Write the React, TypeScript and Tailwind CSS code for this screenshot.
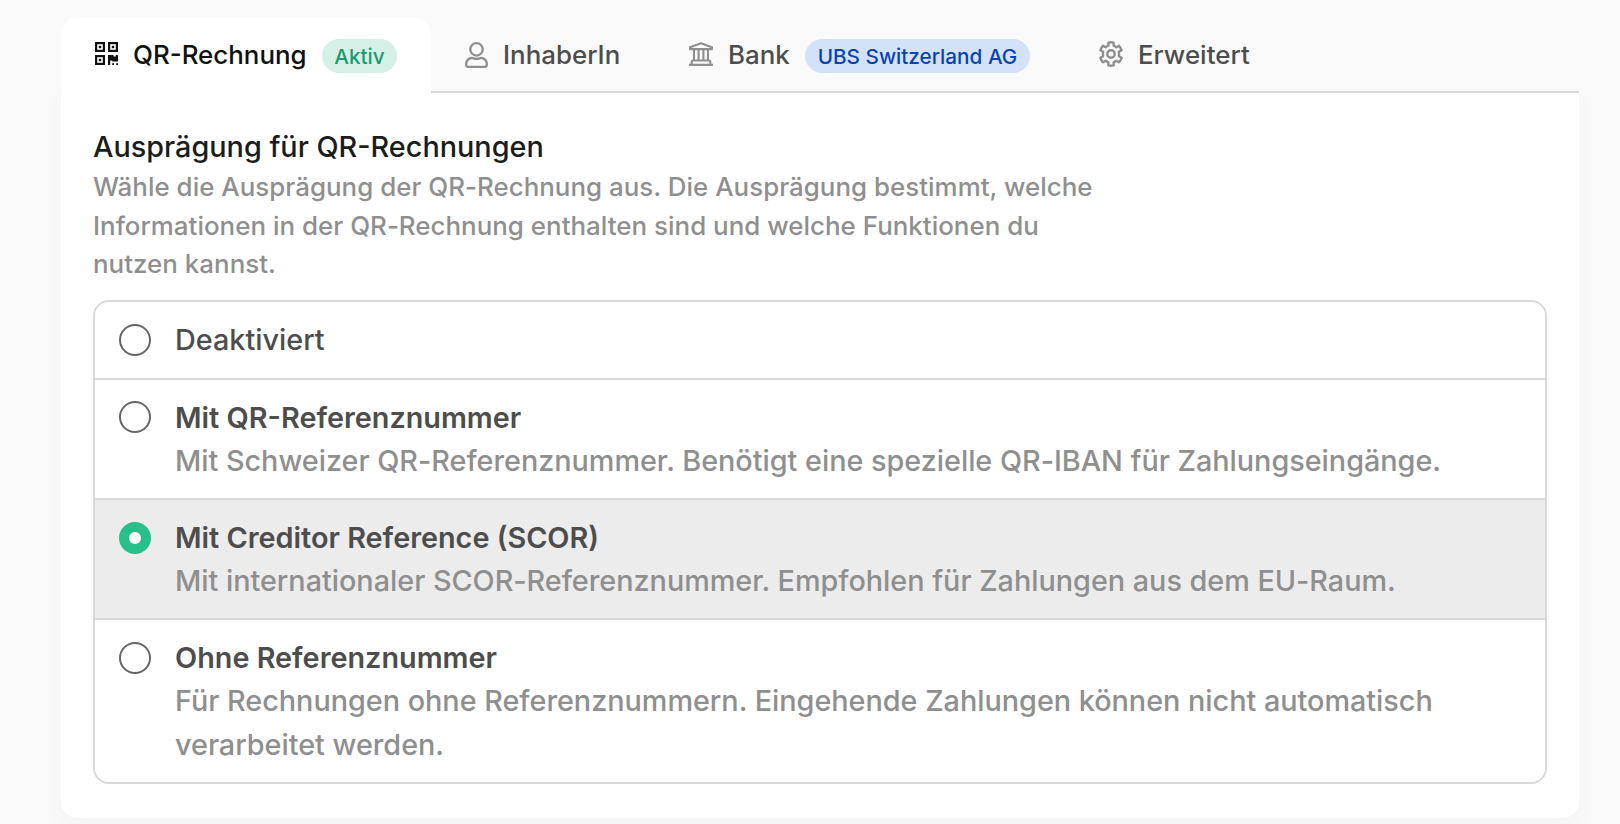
import type { ReactNode } from "react";

function QrIcon() {
  return (
    <svg width="24" height="24" viewBox="0 0 24 24" fill="none" className="-mt-px shrink-0">
      <g stroke="#111" strokeWidth="2.2">
        <rect x="1.1" y="1.1" width="7.8" height="7.8" />
        <rect x="14.1" y="1.1" width="7.8" height="7.8" />
        <rect x="1.1" y="14.1" width="7.8" height="7.8" />
      </g>
      <g fill="#111">
        <rect x="3.8" y="3.8" width="2.4" height="2.4" />
        <rect x="16.8" y="3.8" width="2.4" height="2.4" />
        <rect x="3.8" y="16.8" width="2.4" height="2.4" />
        <path d="M13 13h5.500v1.400h2.300V13H23v6.500h-5.800v-1h-2V23H13z" />
        <rect x="17.2" y="21.2" width="1.8" height="1.8" />
        <rect x="21.2" y="21.2" width="1.8" height="1.8" />
      </g>
    </svg>
  );
}

function UserIcon() {
  return (
    <svg width="23" height="26" viewBox="0 0 23 26" fill="none" stroke="#8f8f8f" strokeWidth="2.3" className="shrink-0">
      <circle cx="11.5" cy="7.4" r="6.2" />
      <path d="M7 16C3.700 16 1.200 18.500 1.200 21.800v1c0 1.100.8 2 1.900 2h16.800c1.100 0 1.900-.9 1.900-2v-1c0-3.300-2.500-5.800-5.800-5.800-1.300 0-2.300.8-4.500.8S8.300 16 7 16z" />
    </svg>
  );
}

function BankIcon() {
  return (
    <svg width="24" height="24" viewBox="0 0 24 24" fill="none" stroke="#8f8f8f" strokeWidth="2.1" strokeLinejoin="round" className="-mt-px shrink-0">
      <path d="M1 5.200 12 1.200l11 4v1.900H1z" />
      <path d="M5 7.500V18M9.600 7.500V18M14.400 7.500V18M19 7.500V18" />
      <path d="M2.700 22v-2c0-.9.6-1.500 1.400-1.500h15.800c.8 0 1.400.6 1.400 1.500v2M0 22.900h24" />
    </svg>
  );
}

function GearIcon() {
  return (
    <svg width="24" height="26" viewBox="1 0 24 26" fill="none" stroke="#8f8f8f" strokeWidth="2.4" strokeLinejoin="round" className="-mt-px shrink-0">
      <path d="M10.400 1.600c1.700-.4 3.500-.4 5.200 0v3.100c1 .3 1.900.9 2.700 1.500l2.700-1.500c1.200 1.300 2.100 2.800 2.600 4.500l-2.700 1.600c.2 1.500.2 2.900 0 4.400l2.700 1.600c-.5 1.700-1.400 3.200-2.600 4.500l-2.700-1.500c-.8.6-1.700 1.200-2.700 1.500v3.100c-1.700.4-3.500.4-5.200 0v-3.100c-1-.3-1.900-.9-2.700-1.500L5 21.300c-1.200-1.300-2.100-2.800-2.600-4.500l2.700-1.600c-.2-1.500-.2-2.900 0-4.400L2.400 9.200C2.900 7.500 3.800 6 5 4.700l2.700 1.500c.8-.6 1.700-1.200 2.700-1.500z" />
      <circle cx="13" cy="13" r="3.7" />
    </svg>
  );
}

function Radio({ selected, className }: { selected?: boolean; className: string }) {
  return (
    <span className={className}>
      {selected ? (
        <span className="flex size-8 items-center justify-center rounded-full bg-[#27c08a]">
          <span className="size-3 rounded-full bg-white" />
        </span>
      ) : (
        <span className="block size-8 rounded-full border-2 border-[#666] bg-white" />
      )}
    </span>
  );
}

type OptionProps = {
  title: string;
  text?: string;
  selected?: boolean;
  size: string;
  radio?: string;
};

function Option({ title, text, selected, size, radio = "mt-1.5 shrink-0" }: OptionProps) {
  return (
    <label className={`flex gap-6 px-6 pt-4 ${size} ${selected ? "bg-[#ececec]" : "bg-white"}`}>
      <Radio selected={selected} className={radio} />
      <span className="flex flex-col text-[28.8px] leading-[43.2px]">
        <span className={text ? "font-semibold text-[#4d4d4d]" : "font-medium text-[#4d4d4d]"}>{title}</span>
        {text && <span className="w-[1300px] leading-[43.5px] font-medium tracking-[-0.02px] text-[#8f8f8f]">{text}</span>}
      </span>
    </label>
  );
}

function Tab({ icon, label, active, size, children }: { icon: ReactNode; label: string; active?: boolean; size: string; children?: ReactNode }) {
  return (
    <div className={`flex h-[73px] items-center ${size}`}>
      {icon}
      <span className={`text-[25.92px] leading-8 font-medium ${active ? "ml-3.5 text-[#111]" : "ml-[15px] text-[#4d4d4d]"}`}>{label}</span>
      {children}
    </div>
  );
}

function Badge({ className, children }: { className: string; children: ReactNode }) {
  return (
    <span className={`mt-[3px] ml-auto flex h-[34px] items-center justify-center rounded-full pt-0.5 text-[20.736px] leading-8 font-medium ${className}`}>
      {children}
    </span>
  );
}

export default function App() {
  return (
    <div className="h-[824px] w-[1620px] overflow-hidden bg-[#fafafa] pt-[18px] pl-[61px] font-['Inter',sans-serif]">
      <div className="relative flex h-[75px] w-[1518px]">
        <div className="w-[370px] rounded-t-2xl bg-white pl-[34px]">
          <Tab icon={<QrIcon />} label="QR-Rechnung" active size="w-[302px]">
            <Badge className="w-[75px] bg-[#d5f1e7] text-[#1f9a70]">Aktiv</Badge>
          </Tab>
        </div>
        <div className="flex flex-1 gap-[69px] border-b-2 border-[#d9d9d9] bg-[#fafafa] pl-[34px]">
          <Tab icon={<UserIcon />} label="InhaberIn" size="w-[155px]" />
          <Tab icon={<BankIcon />} label="Bank" size="w-[341px]">
            <Badge className="w-[225px] bg-[#d4e2f9] text-[#0a43ad]">UBS Switzerland AG</Badge>
          </Tab>
          <Tab icon={<GearIcon />} label="Erweitert" size="w-[160px]" />
        </div>
      </div>
      <main className="h-[725px] w-[1518px] rounded-b-2xl bg-white px-8 pt-8 shadow-[0_8px_24px_rgba(0,0,0,0.03)]">
        <h1 className="h-[43px] text-[28.8px] leading-[43.2px] font-medium text-[#1c1c1c]">Ausprägung für QR-Rechnungen</h1>
        <p className="h-[116px] w-[1020px] text-[25.92px] leading-[38.6px] font-medium tracking-[0.01px] text-[#8f8f8f]">
          Wähle die Ausprägung der QR-Rechnung aus. Die Ausprägung bestimmt, welche Informationen in der QR-Rechnung enthalten sind und welche Funktionen du nutzen kannst.
        </p>
        <div className="mt-4 h-[484px] divide-y-2 divide-[#d9d9d9] overflow-hidden rounded-2xl border-2 border-[#d9d9d9]">
          <Option size="h-[78px]" title="Deaktiviert" />
          <Option
            size="h-[120px]"
            radio="mt-[5px] shrink-0"
            title="Mit QR-Referenznummer"
            text="Mit Schweizer QR-Referenznummer. Benötigt eine spezielle QR-IBAN für Zahlungseingänge."
          />
          <Option
            size="h-[120px]"
            selected
            title="Mit Creditor Reference (SCOR)"
            text="Mit internationaler SCOR-Referenznummer. Empfohlen für Zahlungen aus dem EU-Raum."
          />
          <Option
            size="h-[162px]"
            title="Ohne Referenznummer"
            text="Für Rechnungen ohne Referenznummern. Eingehende Zahlungen können nicht automatisch verarbeitet werden."
          />
        </div>
      </main>
    </div>
  );
}
